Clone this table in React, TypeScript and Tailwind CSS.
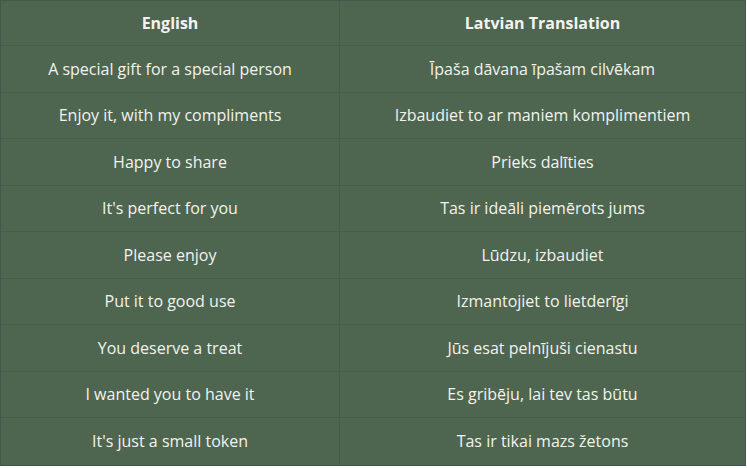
import React from "react";

const rows: [string, string][] = [
  ["A special gift for a special person", "Īpaša dāvana īpašam cilvēkam"],
  ["Enjoy it, with my compliments", "Izbaudiet to ar maniem komplimentiem"],
  ["Happy to share", "Prieks dalīties"],
  ["It's perfect for you", "Tas ir ideāli piemērots jums"],
  ["Please enjoy", "Lūdzu, izbaudiet"],
  ["Put it to good use", "Izmantojiet to lietderīgi"],
  ["You deserve a treat", "Jūs esat pelnījuši cienastu"],
  ["I wanted you to have it", "Es gribēju, lai tev tas būtu"],
  ["It's just a small token", "Tas ir tikai mazs žetons"],
];

export default function App() {
  return (
    <div className="w-[747px] h-[468px] bg-white" style={{ fontFamily: '"Open Sans", "Noto Sans", sans-serif' }}>
      <div className="w-[746px] bg-[#4e6550] border border-[#43584a] text-[#f3f3ee] text-[16px]">
        <div className="grid grid-cols-[339px_1fr] h-[45px] border-b border-[#475c4a] font-bold">
          <div className="flex items-center justify-center border-r border-[#475c4a]">English</div>
          <div className="flex items-center justify-center">Latvian Translation</div>
        </div>
        {rows.map(([en, lv], i) => (
          <div
            key={i}
            className={`grid grid-cols-[339px_1fr] h-[46.5px] ${i < rows.length - 1 ? "border-b border-[#475c4a]" : ""}`}
          >
            <div className="flex items-center justify-center border-r border-[#475c4a]">{en}</div>
            <div className="flex items-center justify-center">{lv}</div>
          </div>
        ))}
      </div>
    </div>
  );
}
